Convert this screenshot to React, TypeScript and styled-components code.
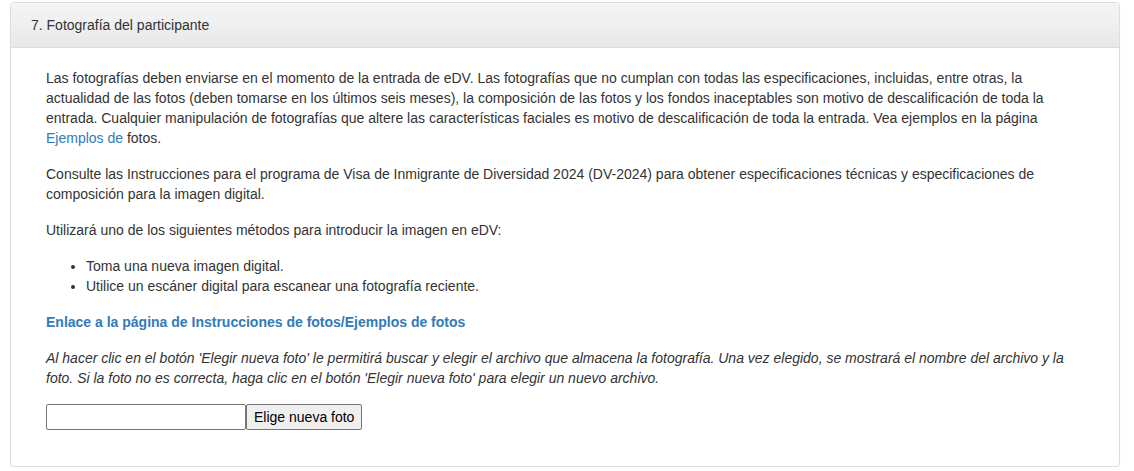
import styled, { createGlobalStyle } from 'styled-components'

const GlobalStyle = createGlobalStyle`
  html, body {
    margin: 0;
    padding: 0;
    background: #ffffff;
  }
  body {
    font-family: "Liberation Sans", Arial, Helvetica, sans-serif;
    font-size: 14px;
    line-height: 20px;
    color: #333333;
  }
`

const Page = styled.div`
  padding: 2px 14px 0 10px;
`

const Panel = styled.section`
  border: 1px solid #dddddd;
  border-radius: 4px;
  background: #ffffff;
  box-shadow: 0 1px 2px rgba(0, 0, 0, 0.05);
  overflow: hidden;
`

const PanelHeading = styled.header`
  padding: 12px 20px;
  background-image: linear-gradient(to bottom, #f5f5f5 0%, #e8e8e8 100%);
  border-bottom: 1px solid #dddddd;
  font-size: 14px;
  line-height: 20px;
  color: #333333;
`

const PanelBody = styled.div`
  padding: 20px 35px 20px 35px;
`

const Paragraph = styled.p<{ $italic?: boolean }>`
  margin: 0 0 16px;
  font-style: ${({ $italic }) => ($italic ? 'italic' : 'normal')};
`

const Link = styled.a<{ $bold?: boolean }>`
  color: #337ab7;
  text-decoration: none;
  font-weight: ${({ $bold }) => ($bold ? 'bold' : 'normal')};
`

const LinkParagraph = styled.p`
  margin: 0 0 16px;
`

const BulletList = styled.ul`
  margin: 0 0 16px;
  padding-left: 40px;
`

const FileRow = styled.div`
  display: flex;
  align-items: stretch;
  margin-bottom: 16px;
`

const FileName = styled.input`
  box-sizing: border-box;
  width: 200px;
  height: 26px;
  margin: 0;
  padding: 1px 4px;
  border: 1px solid #767676;
  border-radius: 2px;
  background: #ffffff;
  font-family: "Liberation Sans", Arial, sans-serif;
  font-size: 14px;
`

const ChooseButton = styled.button`
  box-sizing: border-box;
  height: 26px;
  margin: 0;
  padding: 1px 7px;
  border: 1px solid #767676;
  border-radius: 2px;
  background: #efefef;
  color: #000000;
  font-family: "Liberation Sans", Arial, sans-serif;
  font-size: 14px;
`

function App() {
  return (
    <>
      <GlobalStyle />
      <Page>
        <Panel>
          <PanelHeading>7. Fotografía del participante</PanelHeading>
          <PanelBody>
            <Paragraph>
              Las fotografías deben enviarse en el momento de la entrada de eDV. Las fotografías que
              no cumplan con todas las especificaciones, incluidas, entre otras, la actualidad de las
              fotos (deben tomarse en los últimos seis meses), la composición de las fotos y los
              fondos inaceptables son motivo de descalificación de toda la entrada. Cualquier
              manipulación de fotografías que altere las características faciales es motivo de
              descalificación de toda la entrada. Vea ejemplos en la página{' '}
              <Link href="#">Ejemplos de</Link> fotos.
            </Paragraph>
            <Paragraph>
              Consulte las Instrucciones para el programa de Visa de Inmigrante de Diversidad 2024
              (DV-2024) para obtener especificaciones técnicas y especificaciones de composición para
              la imagen digital.
            </Paragraph>
            <Paragraph>Utilizará uno de los siguientes métodos para introducir la imagen en eDV:</Paragraph>
            <BulletList>
              <li>Toma una nueva imagen digital.</li>
              <li>Utilice un escáner digital para escanear una fotografía reciente.</li>
            </BulletList>
            <LinkParagraph>
              <Link href="#" $bold>
                Enlace a la página de Instrucciones de fotos/Ejemplos de fotos
              </Link>
            </LinkParagraph>
            <Paragraph $italic>
              Al hacer clic en el botón 'Elegir nueva foto' le permitirá buscar y elegir el archivo
              que almacena la fotografía. Una vez elegido, se mostrará el nombre del archivo y la
              foto. Si la foto no es correcta, haga clic en el botón 'Elegir nueva foto' para elegir
              un nuevo archivo.
            </Paragraph>
            <FileRow>
              <FileName type="text" readOnly />
              <ChooseButton type="button">Elige nueva foto</ChooseButton>
            </FileRow>
          </PanelBody>
        </Panel>
      </Page>
    </>
  )
}

export default App
